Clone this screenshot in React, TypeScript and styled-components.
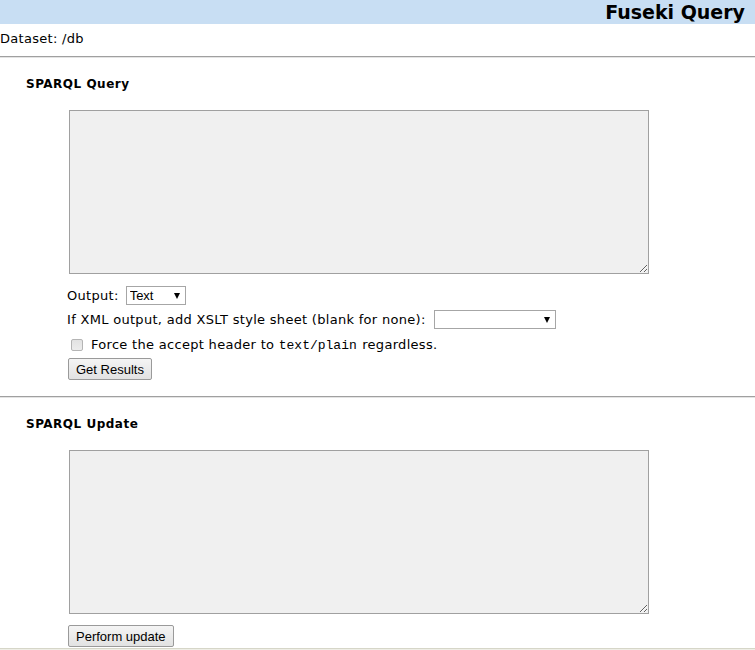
import React from "react";
import styled, { createGlobalStyle } from "styled-components";

const Global = createGlobalStyle`
  html, body { margin: 0; padding: 0; background: #fff; }
  body {
    font-family: "DejaVu Sans", Verdana, sans-serif;
    font-size: 13px;
    letter-spacing: 0.3px;
    color: #000;
    -webkit-font-smoothing: none;
  }
`;

const Header = styled.div`
  height: 24px;
  background: #c8def3;
  display: flex;
  justify-content: flex-end;
  align-items: center;
  padding-right: 10px;
`;

const Title = styled.h1`
  margin: 0;
  font-family: "DejaVu Sans", Verdana, sans-serif;
  font-weight: bold;
  font-size: 19px;
  letter-spacing: 0;
  line-height: 24px;
`;

const Dataset = styled.div`
  padding-top: 7px;
  line-height: 15px;
  height: 15px;
`;

const Rule = styled.hr<{ $top: number; $light?: boolean }>`
  margin: ${(p) => p.$top}px 0 0;
  height: 0;
  border: 0;
  border-top: 1px solid ${(p) => (p.$light ? "#d6d6c8" : "#a0a0a0")};
  border-bottom: 1px solid ${(p) => (p.$light ? "#eeeee6" : "#e4e4e4")};
`;

const Section = styled.section`
  padding-left: 26px;
`;

const SectionTitle = styled.h2`
  margin: 19px 0 0;
  font-size: 12px;
  letter-spacing: 0.5px;
  font-weight: bold;
  line-height: 15px;
`;

const Body = styled.div`
  padding-left: 41px;
  display: flex;
  flex-direction: column;
  align-items: flex-start;
`;

const Area = styled.textarea`
  margin: 18px 0 0 2px;
  width: 580px;
  height: 164px;
  box-sizing: border-box;
  background: #f0f0f0;
  border: 1px solid #a0a0a0;
  border-radius: 0;
  padding: 2px;
  font-family: "Liberation Mono", monospace;
  font-size: 13px;
  outline: none;
`;

const Row = styled.div<{ $top: number; $h: number }>`
  margin-top: ${(p) => p.$top}px;
  height: ${(p) => p.$h}px;
  display: flex;
  align-items: center;
  white-space: nowrap;
`;

const Label = styled.span<{ $gap?: number }>`
  margin-right: ${(p) => p.$gap ?? 7}px;
`;

const SelectWrap = styled.span<{ $w: number }>`
  position: relative;
  display: inline-block;
  width: ${(p) => p.$w}px;
  height: 19px;
  letter-spacing: 0;
`;

const Select = styled.select`
  appearance: none;
  -webkit-appearance: none;
  width: 100%;
  height: 100%;
  box-sizing: border-box;
  border: 1px solid #a6a6a6;
  border-radius: 0;
  background: #fff;
  font-family: "Liberation Sans", Arial, sans-serif;
  font-size: 13px;
  padding: 0 0 0 3px;
  color: #000;
  outline: none;
`;

const Arrow = styled.span`
  position: absolute;
  right: 6px;
  top: 7px;
  width: 0;
  height: 0;
  border-left: 3.5px solid transparent;
  border-right: 3.5px solid transparent;
  border-top: 6px solid #000;
  pointer-events: none;
`;

const Check = styled.input`
  appearance: none;
  -webkit-appearance: none;
  margin: 0 8px 0 4px;
  width: 12px;
  height: 12px;
  box-sizing: border-box;
  border: 1px solid #b4b4b4;
  border-radius: 2px;
  background: linear-gradient(#e2e2e2, #ececec);
`;

const Mono = styled.code`
  font-family: "Liberation Mono", "Courier New", monospace;
  font-size: 13px;
  letter-spacing: 0;
  margin-right: 1px;
`;

const Button = styled.button<{ $top: number }>`
  margin-top: ${(p) => p.$top}px;
  margin-left: 1px;
  height: 22px;
  padding: 0 7px;
  border: 1px solid #9a9a9a;
  border-radius: 2px;
  background: linear-gradient(#f4f4f4, #e2e2e2);
  font-family: "Liberation Sans", Arial, sans-serif;
  font-size: 13px;
  letter-spacing: 0;
  color: #000;
`;

export default function App() {
  return (
    <>
      <Global />
      <Header>
        <Title>Fuseki Query</Title>
      </Header>
      <Dataset>Dataset: /db</Dataset>
      <Rule $top={10} />
      <Section>
        <SectionTitle>SPARQL Query</SectionTitle>
        <Body>
          <Area />
          <Row $top={11} $h={21}>
            <Label>Output:</Label>
            <SelectWrap $w={60}>
              <Select defaultValue="text">
                <option value="text">Text</option>
              </Select>
              <Arrow />
            </SelectWrap>
          </Row>
          <Row $top={3} $h={21}>
            <Label $gap={8}>If XML output, add XSLT style sheet (blank for none):</Label>
            <SelectWrap $w={122}>
              <Select defaultValue="">
                <option value=""></option>
              </Select>
              <Arrow />
            </SelectWrap>
          </Row>
          <Row $top={5} $h={19}>
            <Check type="checkbox" />
            <span>
              Force the accept header to <Mono>text/plain</Mono> regardless.
            </span>
          </Row>
          <Button $top={4}>Get Results</Button>
        </Body>
      </Section>
      <Rule $top={16} />
      <Section>
        <SectionTitle>SPARQL Update</SectionTitle>
        <Body>
          <Area />
          <Button $top={11}>Perform update</Button>
        </Body>
      </Section>
      <Rule $top={1} $light />
    </>
  );
}
